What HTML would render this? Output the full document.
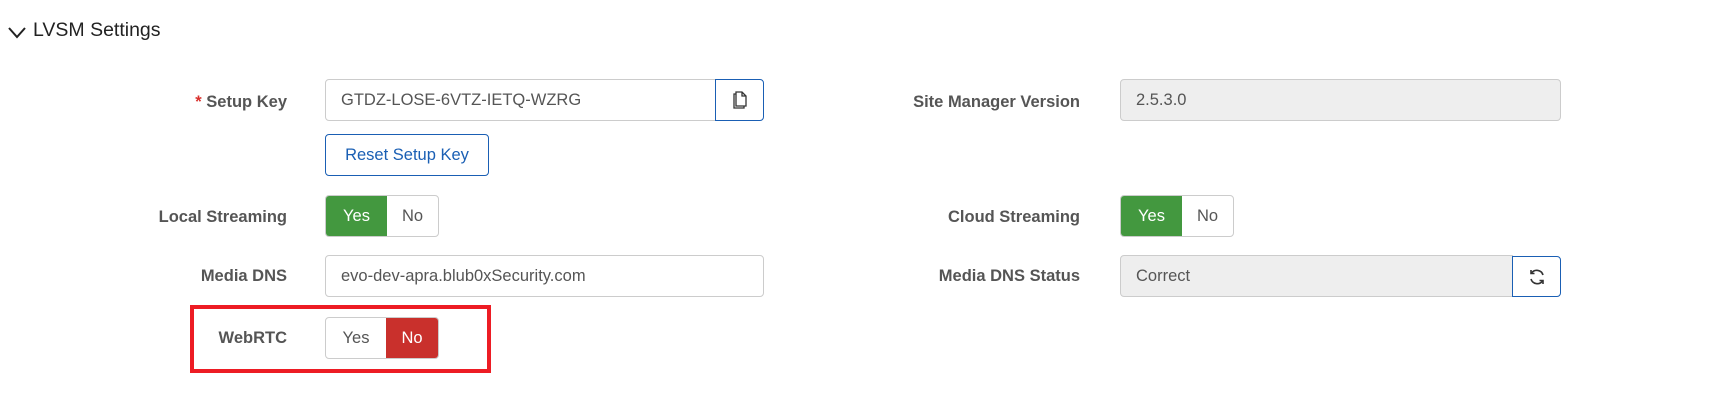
<!DOCTYPE html>
<html><head><style>
body{margin:0;width:1712px;height:412px;background:#fff;font-family:"Liberation Sans",Arial,sans-serif;position:relative;overflow:hidden}
.a{position:absolute;box-sizing:border-box}
.lbl{font-weight:bold;font-size:16.5px;color:#555;text-align:right;width:300px;line-height:20px}
.inp{border:1px solid #ccc;border-radius:4px;font-size:16.5px;color:#555;padding-left:15px;display:flex;align-items:center;height:42px}
.ro{background:#eee}
.btn{border:1px solid #1a5fb4;border-radius:4px;background:#fff;display:flex;align-items:center;justify-content:center}
.tg{height:42px;display:flex;border:1px solid #ccc;border-radius:4px;overflow:hidden;font-size:16.5px}
.tg div{display:flex;align-items:center;justify-content:center}
</style></head><body>
<svg class="a" style="left:7px;top:26px" width="20" height="14" viewBox="0 0 20 14"><path d="M2 2 L10 11 L18 2" stroke="#222" stroke-width="2" fill="none"/></svg>
<div class="a" style="left:33px;top:19px;font-size:19.5px;color:#222">LVSM Settings</div>

<div class="a lbl" style="left:-13px;top:92px"><span style="color:#d9302c">*</span> Setup Key</div>
<div class="a inp" style="left:325px;top:79px;width:392px;border-radius:4px 0 0 4px">GTDZ-LOSE-6VTZ-IETQ-WZRG</div>
<div class="a btn" style="left:715px;top:79px;width:49px;height:42px;border-radius:0 4px 4px 0"><svg width="14" height="18" viewBox="0 0 14 18"><path d="M3 3H1v14h10v-2M3 1h6l4 4v10H3z M9 1v4h4" stroke="#333" stroke-width="1.3" fill="#fff"/></svg></div>
<div class="a btn" style="left:325px;top:134px;width:164px;height:42px;color:#1a5fb4;font-size:16.5px">Reset Setup Key</div>

<div class="a lbl" style="left:-13px;top:207px">Local Streaming</div>
<div class="a tg" style="left:325px;top:195px;width:114px"><div style="width:61px;background:#43983f;color:#fff">Yes</div><div style="flex:1;color:#555">No</div></div>

<div class="a lbl" style="left:-13px;top:266px">Media DNS</div>
<div class="a inp" style="left:325px;top:255px;width:439px">evo-dev-apra.blub0xSecurity.com</div>

<div class="a" style="left:190px;top:305px;width:301px;height:68px;border:4px solid #ed1c24"></div>
<div class="a lbl" style="left:-13px;top:328px">WebRTC</div>
<div class="a tg" style="left:325px;top:317px;width:114px"><div style="width:60px;color:#555">Yes</div><div style="flex:1;background:#c9302c;color:#fff">No</div></div>

<div class="a lbl" style="left:780px;top:92px">Site Manager Version</div>
<div class="a inp ro" style="left:1120px;top:79px;width:441px">2.5.3.0</div>

<div class="a lbl" style="left:780px;top:207px">Cloud Streaming</div>
<div class="a tg" style="left:1120px;top:195px;width:114px"><div style="width:61px;background:#43983f;color:#fff">Yes</div><div style="flex:1;color:#555">No</div></div>

<div class="a lbl" style="left:780px;top:266px">Media DNS Status</div>
<div class="a inp ro" style="left:1120px;top:255px;width:393px;border-radius:4px 0 0 4px">Correct</div>
<div class="a btn" style="left:1512px;top:256px;width:49px;height:41px;border-radius:0 4px 4px 0"><svg width="18" height="18" viewBox="0 0 18 18" fill="none" stroke="#333" stroke-width="1.6"><path d="M15 7A6.5 6.5 0 0 0 3.5 5M3 11a6.5 6.5 0 0 0 11.5 2"/><path d="M3 2v3.5h3.5M15 16v-3.5h-3.5"/></svg></div>
</body></html>
